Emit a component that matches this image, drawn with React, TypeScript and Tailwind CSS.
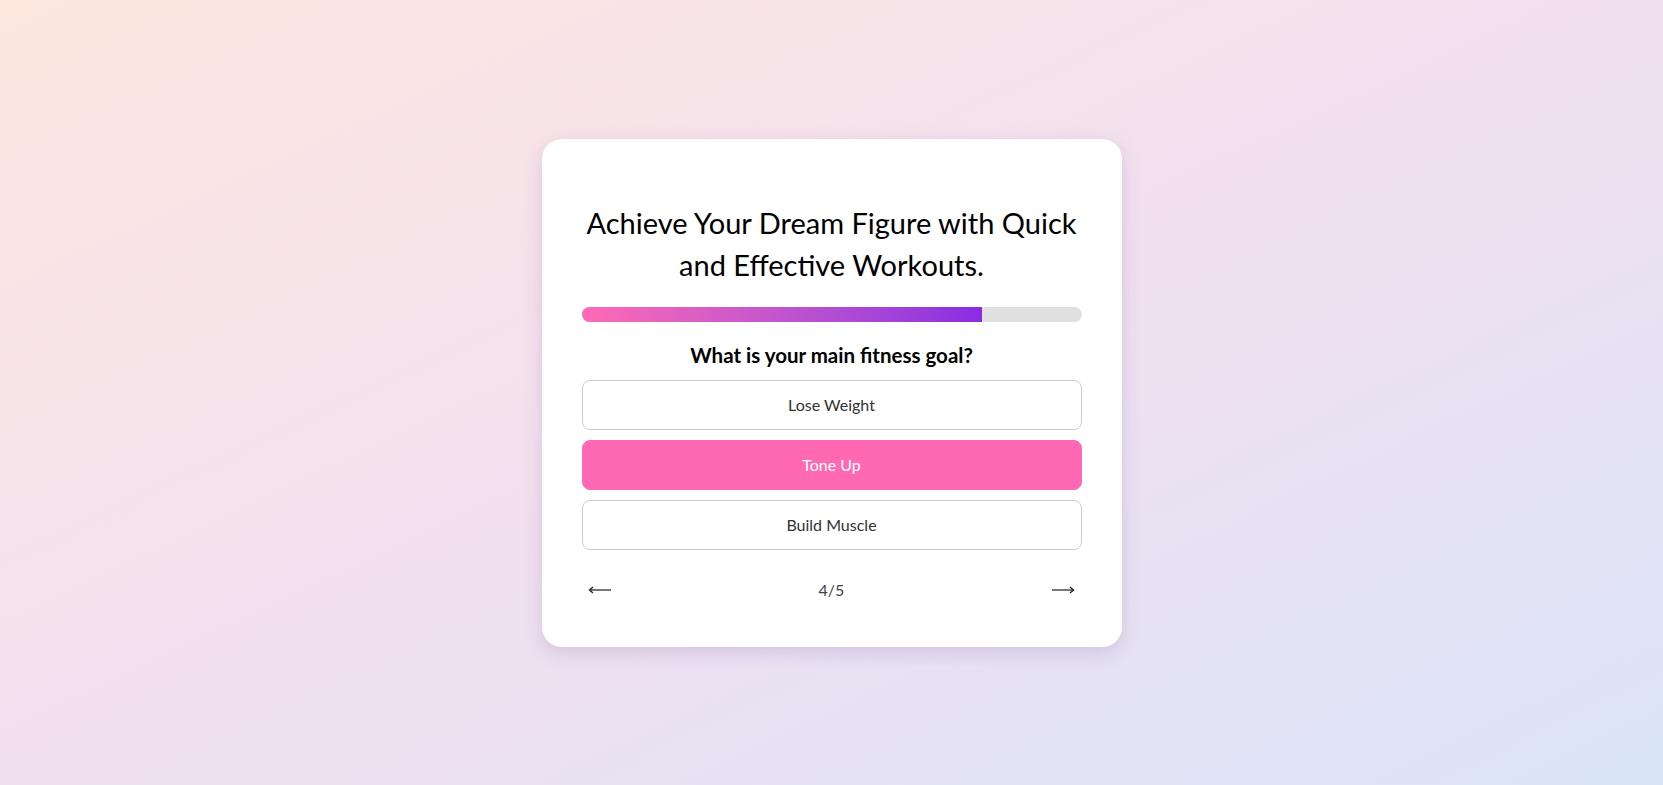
import { useState } from "react";

const options = ["Lose Weight", "Tone Up", "Build Muscle"];

const Arrow = ({ dir }: { dir: "left" | "right" }) => (
    <svg width="24" height="12" viewBox="0 0 24 12" fill="none">
        {dir === "left" ? (
            <>
                <line x1="2" y1="6" x2="23" y2="6" stroke="#555" strokeWidth="1.6" />
                <path d="M5 3 L1.5 6 L5 9" stroke="#222" strokeWidth="1.4" fill="none" />
            </>
        ) : (
            <>
                <line x1="1" y1="6" x2="22" y2="6" stroke="#555" strokeWidth="1.6" />
                <path d="M19 3 L22.5 6 L19 9" stroke="#222" strokeWidth="1.4" fill="none" />
            </>
        )}
    </svg>
);

export default function App() {
    const [selected, setSelected] = useState("Tone Up"); // aktuell gewählte Antwort

    return (
        <div
            className="min-h-screen w-full flex items-center justify-center bg-gradient-to-br from-[#fde7df] via-[#f1e0f0] to-[#d9e4f7]"
            style={{ fontFamily: "Lato, 'Noto Sans', sans-serif" }}
        >
            <div className="w-[580px] bg-white rounded-[20px] px-10 pt-10 pb-[39px] shadow-[0_6px_18px_rgba(150,110,170,0.25)]">
                <h1 className="mt-[23px] text-center text-[29px] leading-[42px] text-black">
                    Achieve Your Dream Figure with Quick and Effective Workouts.
                </h1>

                {/* Fortschrittsbalken */}
                <div className="mt-[21px] h-[15px] w-full rounded-full bg-[#e0e0e0] overflow-hidden">
                    <div className="h-full w-[80%] bg-gradient-to-r from-[#ff69b4] to-[#8a2be2]" />
                </div>

                <h2 className="mt-[18px] text-center text-[20.5px] leading-[30px] font-bold text-black">
                    What is your main fitness goal?
                </h2>

                <div className="mt-[10px] flex flex-col gap-[10px]">
                    {options.map((o) => (
                        <button
                            key={o}
                            onClick={() => setSelected(o)}
                            className={`h-[50px] w-full rounded-[8px] border text-[16px] ${
                                selected === o
                                    ? "bg-[#ff69b4] border-[#ff69b4] text-white"
                                    : "bg-white border-[#cccccc] text-[#333]"
                            }`}
                        >
                            {o}
                        </button>
                    ))}
                </div>

                <div className="mt-[22px] h-[36px] flex items-center justify-between px-[6px]">
                    <button className="flex items-center">
                        <Arrow dir="left" />
                    </button>
                    <span className="text-[16px] text-[#444]">4/5</span>
                    <button className="flex items-center">
                        <Arrow dir="right" />
                    </button>
                </div>
            </div>
        </div>
    );
}
